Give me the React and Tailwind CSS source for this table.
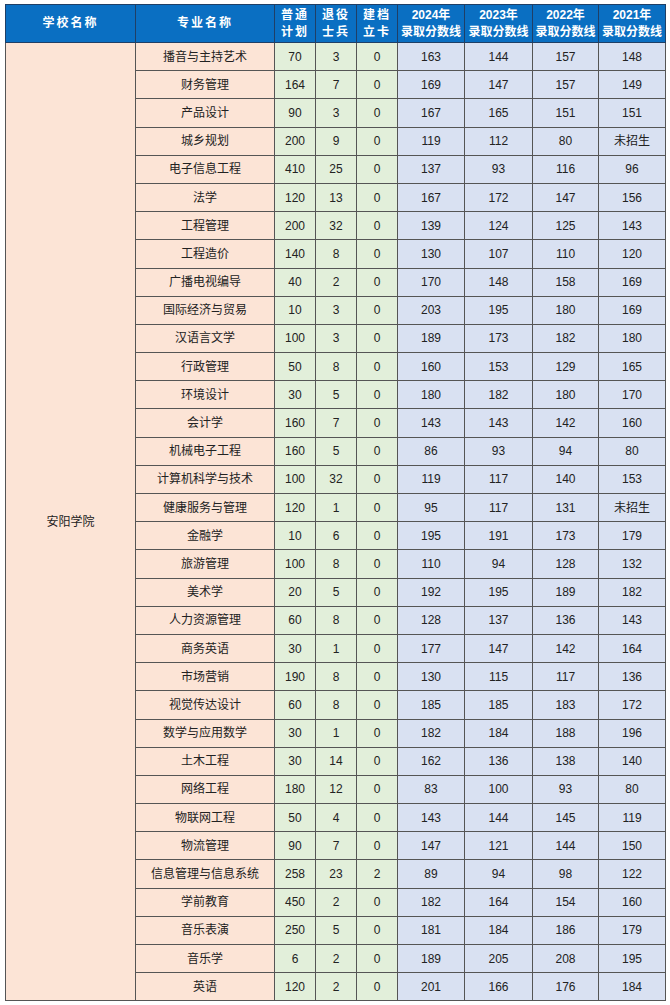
import React from "react";

const rows = [
  ["播音与主持艺术", 70, 3, 0, 163, 144, 157, 148],
  ["财务管理", 164, 7, 0, 169, 147, 157, 149],
  ["产品设计", 90, 3, 0, 167, 165, 151, 151],
  ["城乡规划", 200, 9, 0, 119, 112, 80, "未招生"],
  ["电子信息工程", 410, 25, 0, 137, 93, 116, 96],
  ["法学", 120, 13, 0, 167, 172, 147, 156],
  ["工程管理", 200, 32, 0, 139, 124, 125, 143],
  ["工程造价", 140, 8, 0, 130, 107, 110, 120],
  ["广播电视编导", 40, 2, 0, 170, 148, 158, 169],
  ["国际经济与贸易", 10, 3, 0, 203, 195, 180, 169],
  ["汉语言文学", 100, 3, 0, 189, 173, 182, 180],
  ["行政管理", 50, 8, 0, 160, 153, 129, 165],
  ["环境设计", 30, 5, 0, 180, 182, 180, 170],
  ["会计学", 160, 7, 0, 143, 143, 142, 160],
  ["机械电子工程", 160, 5, 0, 86, 93, 94, 80],
  ["计算机科学与技术", 100, 32, 0, 119, 117, 140, 153],
  ["健康服务与管理", 120, 1, 0, 95, 117, 131, "未招生"],
  ["金融学", 10, 6, 0, 195, 191, 173, 179],
  ["旅游管理", 100, 8, 0, 110, 94, 128, 132],
  ["美术学", 20, 5, 0, 192, 195, 189, 182],
  ["人力资源管理", 60, 8, 0, 128, 137, 136, 143],
  ["商务英语", 30, 1, 0, 177, 147, 142, 164],
  ["市场营销", 190, 8, 0, 130, 115, 117, 136],
  ["视觉传达设计", 60, 8, 0, 185, 185, 183, 172],
  ["数学与应用数学", 30, 1, 0, 182, 184, 188, 196],
  ["土木工程", 30, 14, 0, 162, 136, 138, 140],
  ["网络工程", 180, 12, 0, 83, 100, 93, 80],
  ["物联网工程", 50, 4, 0, 143, 144, 145, 119],
  ["物流管理", 90, 7, 0, 147, 121, 144, 150],
  ["信息管理与信息系统", 258, 23, 2, 89, 94, 98, 122],
  ["学前教育", 450, 2, 0, 182, 164, 154, 160],
  ["音乐表演", 250, 5, 0, 181, 184, 186, 179],
  ["音乐学", 6, 2, 0, 189, 205, 208, 195],
  ["英语", 120, 2, 0, 201, 166, 176, 184],
];

const years = ["2024年", "2023年", "2022年", "2021年"];

const th = "border border-[#1f3f66] font-bold text-white text-[12px] leading-[17px] text-center align-middle";
const td = "border border-[#555] text-center align-middle text-[12px] text-[#222]";

export default function App() {
  return (
    <div className="w-[670px] h-[1005px] bg-white pt-[4px] pl-[5px]" style={{ fontFamily: '"Liberation Sans", "Noto Sans CJK SC", sans-serif' }}>
      <table className="table-fixed border-collapse w-[660px] border border-[#333]">
        <colgroup>
          <col className="w-[130px]" />
          <col className="w-[139px]" />
          <col className="w-[41px]" />
          <col className="w-[41px]" />
          <col className="w-[41px]" />
          <col className="w-[67px]" />
          <col className="w-[68px]" />
          <col className="w-[66px]" />
          <col className="w-[67px]" />
        </colgroup>
        <thead>
          <tr className="h-[38px] bg-[#0a6fc2]">
            <th className={th + " tracking-[2px]"}>学校名称</th>
            <th className={th + " tracking-[2px]"}>专业名称</th>
            <th className={th + " tracking-[2px]"}>普通<br />计划</th>
            <th className={th + " tracking-[2px]"}>退役<br />士兵</th>
            <th className={th + " tracking-[2px]"}>建档<br />立卡</th>
            {years.map((y) => (
              <th key={y} className={th + " px-0"}>
                {y}
                <br />
                录取分数线
              </th>
            ))}
          </tr>
        </thead>
        <tbody>
          {rows.map((r, i) => (
            <tr key={i} className="h-[28.2px]">
              {i === 0 && (
                <td rowSpan={rows.length} className={td + " bg-[#fce4d6] border-[#8a7a70]"}>
                  安阳学院
                </td>
              )}
              <td className={td + " bg-[#fce4d6]"}>{r[0]}</td>
              <td className={td + " bg-[#e2efda]"}>{r[1]}</td>
              <td className={td + " bg-[#e2efda]"}>{r[2]}</td>
              <td className={td + " bg-[#e2efda]"}>{r[3]}</td>
              <td className={td + " bg-[#d9e1f2] border-[#6b7280]"}>{r[4]}</td>
              <td className={td + " bg-[#d9e1f2] border-[#6b7280]"}>{r[5]}</td>
              <td className={td + " bg-[#d9e1f2] border-[#6b7280]"}>{r[6]}</td>
              <td className={td + " bg-[#d9e1f2] border-[#6b7280]"}>{r[7]}</td>
            </tr>
          ))}
        </tbody>
      </table>
    </div>
  );
}
